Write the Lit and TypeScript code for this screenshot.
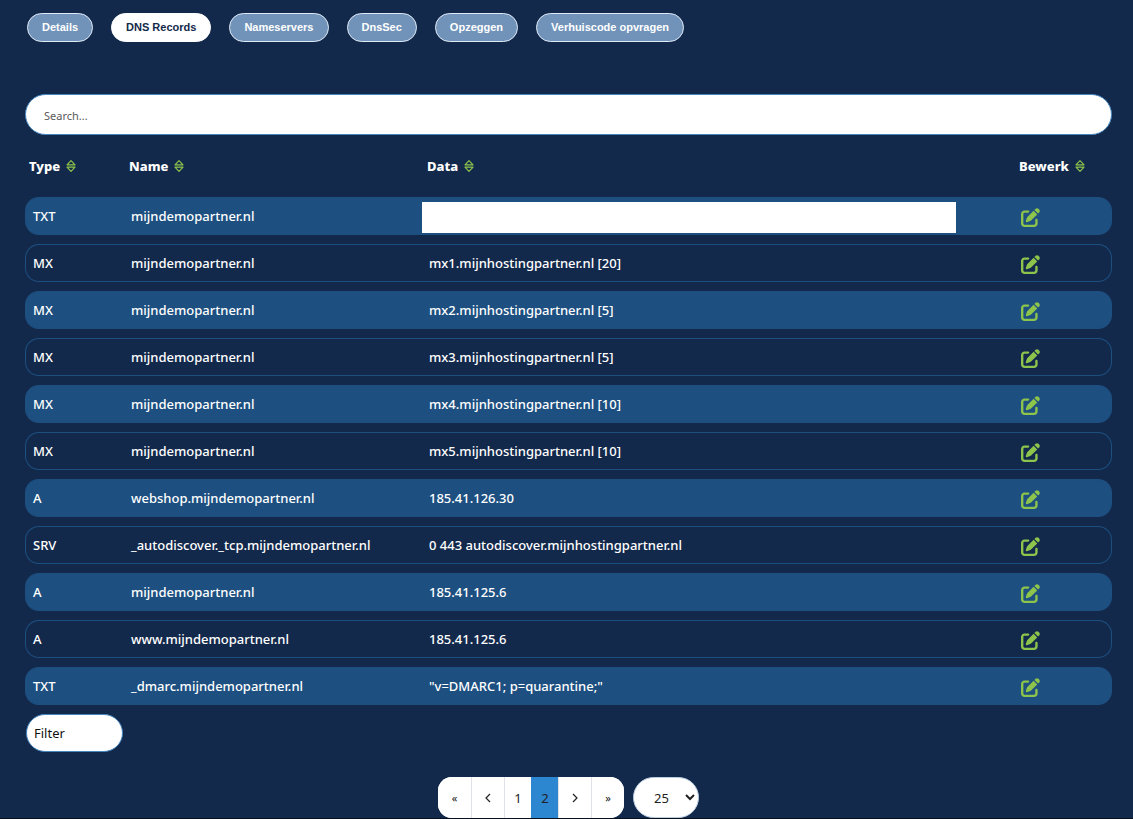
import { LitElement, html, css } from "lit";
import { customElement, state } from "lit/decorators.js";
import { classMap } from "lit/directives/class-map.js";

interface DnsRecord {
  type: string;
  name: string;
  data: string | null;
}

const TABS = ["Details", "DNS Records", "Nameservers", "DnsSec", "Opzeggen", "Verhuiscode opvragen"];
const COLUMNS = ["Type", "Name", "Data", "Bewerk"];
const DOMAIN = "mijndemopartner.nl";

// A null value is shown as a blanked-out block.
const RECORDS: DnsRecord[] = [
  { type: "TXT", name: DOMAIN, data: null },
  { type: "MX", name: DOMAIN, data: "mx1.mijnhostingpartner.nl [20]" },
  { type: "MX", name: DOMAIN, data: "mx2.mijnhostingpartner.nl [5]" },
  { type: "MX", name: DOMAIN, data: "mx3.mijnhostingpartner.nl [5]" },
  { type: "MX", name: DOMAIN, data: "mx4.mijnhostingpartner.nl [10]" },
  { type: "MX", name: DOMAIN, data: "mx5.mijnhostingpartner.nl [10]" },
  { type: "A", name: "webshop." + DOMAIN, data: "185.41.126.30" },
  { type: "SRV", name: "_autodiscover._tcp." + DOMAIN, data: "0 443 autodiscover.mijnhostingpartner.nl" },
  { type: "A", name: DOMAIN, data: "185.41.125.6" },
  { type: "A", name: "www." + DOMAIN, data: "185.41.125.6" },
  { type: "TXT", name: "_dmarc." + DOMAIN, data: '"v=DMARC1; p=quarantine;"' },
];

const sortIcon = html`<svg width="10" height="12" viewBox="0 0 10 12" fill="none" stroke="currentColor" stroke-width="1.2" stroke-linejoin="round" aria-hidden="true">
  <path d="M5 0.7 L9 4.8 H1 Z M5 11.3 L9 7.2 H1 Z" />
</svg>`;

const editIcon = html`<svg width="19" height="19" viewBox="0 0 512 512" fill="currentColor" aria-hidden="true">
  <path d="M471.6 21.7c-21.9-21.9-57.3-21.9-79.2 0L362.3 51.7l97.9 97.9 30.1-30.1c21.9-21.9 21.9-57.3 0-79.2L471.6 21.7zm-299.2 220c-6.1 6.1-10.8 13.6-13.5 21.9l-29.6 88.8c-2.9 8.6-.6 18.1 5.8 24.6s15.9 8.7 24.6 5.8l88.8-29.6c8.2-2.7 15.7-7.4 21.9-13.5L437.7 172.3 339.7 74.3 172.4 241.7zM96 64C43 64 0 107 0 160V416c0 53 43 96 96 96H352c53 0 96-43 96-96V320c0-17.7-14.3-32-32-32s-32 14.3-32 32v96c0 17.7-14.3 32-32 32H96c-17.7 0-32-14.3-32-32V160c0-17.7 14.3-32 32-32h96c17.7 0 32-14.3 32-32s-14.3-32-32-32H96z" />
</svg>`;

const chevron = (d: string) => html`<svg width="6" height="10" viewBox="0 0 6 10" fill="none" stroke="currentColor" stroke-width="1.2" aria-hidden="true">
  <path d=${d} />
</svg>`;

@customElement("app-root")
export class AppRoot extends LitElement {
  @state() private tab = "DNS Records";
  @state() private page = 2;

  static styles = css`
    :host {
      display: block;
      min-height: 100vh;
      box-sizing: border-box;
      padding: 13px 21px 0 25px;
      background: #13294b;
      border-bottom: 1px solid #06101f;
      color: #fff;
      font-family: "Noto Sans", "Segoe UI", sans-serif;
      font-size: 13px;
      line-height: 20px;
    }
    * {
      box-sizing: border-box;
    }
    button,
    input,
    select {
      font: inherit;
      margin: 0;
    }
    button {
      cursor: pointer;
    }
    .tabs {
      display: flex;
      flex-wrap: wrap;
      gap: 18px;
      padding-left: 2px;
      margin-bottom: 52px;
    }
    .tab {
      height: 29px;
      padding: 0 14px 2px;
      border: 1px solid #dfeaf6;
      border-radius: 15px;
      background: #7193b9;
      color: #fff;
      font: bold 11px/16px "Liberation Sans", Arial, sans-serif;
    }
    .tab.active {
      background: #fff;
      border-color: #fff;
      color: #13294b;
    }
    .search {
      display: block;
      width: 100%;
      height: 41px;
      padding: 2px 18px 0;
      border: 1px solid #4486c0;
      border-radius: 21px;
      background: #fff;
      color: #333;
      font-size: 11px;
    }
    .search::placeholder {
      color: #5a5a5a;
      opacity: 1;
    }
    .records {
      width: 100%;
      table-layout: fixed;
      border-collapse: separate;
      border-spacing: 0 9px;
    }
    .col-type {
      width: 98px;
    }
    .col-name {
      width: 298px;
    }
    .col-edit {
      width: 99px;
    }
    .head {
      height: 44px;
      padding: 0 0 0 6px;
      text-align: left;
    }
    .head:first-child {
      padding-left: 4px;
    }
    .sort {
      display: inline-flex;
      align-items: center;
      gap: 6px;
      padding: 0;
      border: 0;
      background: none;
      color: #fff;
      font-weight: 800;
    }
    .sort svg,
    .edit {
      color: #8dc44c;
    }
    .cell {
      height: 38px;
      padding: 0 8px;
      border: solid #1d4f80;
      border-width: 1px 0;
      font-weight: 500;
    }
    .cell:first-child {
      padding-left: 7px;
      border-left-width: 1px;
      border-radius: 14px 0 0 14px;
    }
    .cell:last-child {
      border-right-width: 1px;
      border-radius: 0 14px 14px 0;
    }
    .row:nth-child(odd) .cell {
      background: #1d4f80;
    }
    .cell.blank {
      padding: 3px 57px 0 1px;
    }
    .mask {
      display: block;
      height: 31px;
      background: #fff;
    }
    .edit {
      display: flex;
      padding: 2px 0 0;
      border: 0;
      background: none;
    }
    .foot {
      padding: 0 1px;
    }
    .filter {
      display: block;
      width: 97px;
      height: 38px;
      padding: 0 7px;
      border: 1px solid #4486c0;
      border-radius: 19px;
      background: #fff;
      color: #222;
    }
    .filter::placeholder {
      color: #111;
      opacity: 1;
    }
    .pager {
      display: flex;
      justify-content: center;
      gap: 9px;
      margin-top: 16px;
      color: #222;
    }
    .pages {
      display: flex;
      height: 41px;
      border-radius: 14px;
      overflow: hidden;
      background: #fff;
    }
    .page {
      display: flex;
      align-items: center;
      justify-content: center;
      width: 33px;
      padding: 0;
      border: 0;
      border-left: 1px solid #dee2e6;
      background: #fff;
      color: #222;
      font-size: 11px;
    }
    .page:first-child {
      border-left: 0;
    }
    .page.number {
      width: 27px;
      font-size: 13px;
    }
    .page.current {
      background: #2d86d0;
      border-color: #2d86d0;
    }
    .size {
      width: 66px;
      height: 41px;
      padding: 0 0 0 16px;
      border: 1px solid #b9cde0;
      border-radius: 21px;
      background: #fff;
      color: #222;
    }
  `;

  private renderRow(record: DnsRecord) {
    return html`<tr class="row">
      <td class="cell">${record.type}</td>
      <td class="cell">${record.name}</td>
      ${record.data === null
        ? html`<td class="cell blank"><span class="mask"></span></td>`
        : html`<td class="cell">${record.data}</td>`}
      <td class="cell"><button class="edit" aria-label="Bewerk">${editIcon}</button></td>
    </tr>`;
  }

  private renderPage(n: number) {
    return html`<button
      class=${classMap({ page: true, number: true, current: n === this.page })}
      @click=${() => (this.page = n)}
    >${n}</button>`;
  }

  render() {
    return html`
      <nav class="tabs">
        ${TABS.map(
          (label) => html`<button
            class=${classMap({ tab: true, active: label === this.tab })}
            @click=${() => (this.tab = label)}
          >${label}</button>`
        )}
      </nav>
      <input class="search" type="text" placeholder="Search..." aria-label="Search" />
      <table class="records">
        <colgroup>
          <col class="col-type" />
          <col class="col-name" />
          <col />
          <col class="col-edit" />
        </colgroup>
        <thead>
          <tr>
            ${COLUMNS.map((c) => html`<th class="head"><button class="sort">${c}${sortIcon}</button></th>`)}
          </tr>
        </thead>
        <tbody>
          ${RECORDS.map((r) => this.renderRow(r))}
        </tbody>
        <tfoot>
          <tr>
            <td class="foot" colspan="4">
              <input class="filter" type="text" placeholder="Filter" aria-label="Filter" />
            </td>
          </tr>
        </tfoot>
      </table>
      <div class="pager">
        <nav class="pages">
          <button class="page" aria-label="First" @click=${() => (this.page = 1)}>«</button>
          <button class="page" aria-label="Previous" @click=${() => (this.page = 1)}>${chevron("M5 1 L1 5 L5 9")}</button>
          ${[1, 2].map((n) => this.renderPage(n))}
          <button class="page" aria-label="Next" @click=${() => (this.page = 2)}>${chevron("M1 1 L5 5 L1 9")}</button>
          <button class="page" aria-label="Last" @click=${() => (this.page = 2)}>»</button>
        </nav>
        <select class="size" aria-label="Aantal per pagina">
          <option>10</option>
          <option selected>25</option>
          <option>50</option>
          <option>100</option>
        </select>
      </div>
    `;
  }
}
